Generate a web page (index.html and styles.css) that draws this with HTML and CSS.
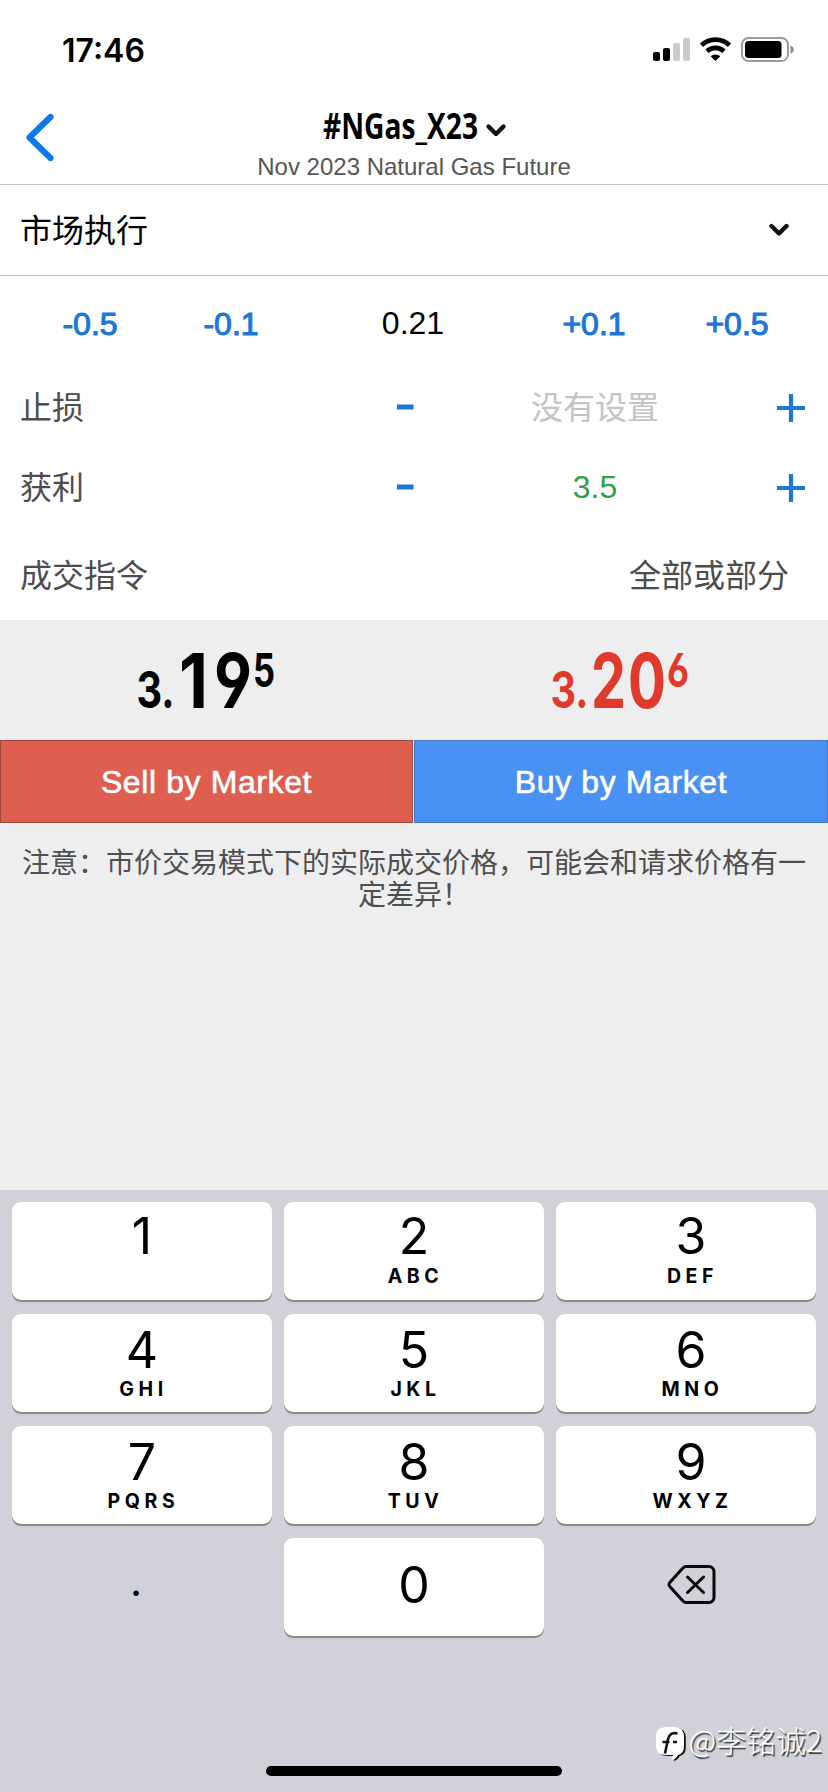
FILE: index.html
```html
<!DOCTYPE html>
<html lang="zh-CN">
<head>
<meta charset="utf-8">
<title>#NGas_X23</title>
<link rel="stylesheet" href="styles.css">
</head>
<body>
<div class="screen">
  <header class="status">
    <span class="clock">17:46</span>
    <svg class="indicators" width="144" height="30" viewBox="0 0 144 30">
      <rect x="2" y="17" width="7" height="9" rx="2"/>
      <rect x="12" y="13" width="7" height="13" rx="2"/>
      <rect x="22" y="8" width="7" height="18" rx="2" fill="#cbcbcb"/>
      <rect x="32" y="3" width="7" height="23" rx="2" fill="#cbcbcb"/>
      <g fill="none" stroke="#000" stroke-width="4.6">
        <path d="M50.5 10.2a20.5 20.5 0 0 1 28 0"/>
        <path d="M56 16.2a12.6 12.6 0 0 1 17 0"/>
      </g>
      <path d="M64.500 26l-4.800-4.700a7 7 0 0 1 9.600 0z"/>
      <rect x="91" y="3" width="46" height="23" rx="6.500" fill="none" stroke="#9c9c9c" stroke-width="2"/>
      <rect x="94" y="6" width="36.500" height="17" rx="3.500"/>
      <path d="M139.500 10.500q3.300 1 3.300 4t-3.300 4z" fill="#8c8c8c"/>
    </svg>
  </header>

  <nav class="navbar">
    <svg class="back" width="30" height="50" viewBox="0 0 30 50"><path d="M24.500 5L3.500 25.500L24.500 46" fill="none" stroke="#0f7ae5" stroke-width="6.200" stroke-linecap="round" stroke-linejoin="round"/></svg>
    <div class="heading">
      <svg class="symbol" width="184" height="52" viewBox="0 -6 184 52">
        <text class="symbol-text" x="1" y="33" textLength="155" lengthAdjust="spacingAndGlyphs">#NGas_X23</text>
        <path class="chevron" d="M166.500 20.500L174 28L181.500 20.500"/>
      </svg>
      <div class="subtitle">Nov 2023 Natural Gas Future</div>
    </div>
  </nav>

  <div class="mode">
    <span>市场执行</span>
    <svg width="22" height="16" viewBox="0 0 22 16"><path class="chevron" d="M3.500 3L11 10.500L18.500 3"/></svg>
  </div>

  <div class="volume">
    <span class="step">-0.5</span>
    <span class="step">-0.1</span>
    <span class="lots">0.21</span>
    <span class="step">+0.1</span>
    <span class="step">+0.5</span>
  </div>

  <div class="level">
    <span class="label">止损</span>
    <svg width="18" height="30" viewBox="0 0 18 30"><path class="sign" d="M1 14H17.500"/></svg>
    <span class="empty">没有设置</span>
    <svg width="30" height="30" viewBox="0 0 30 30"><path class="sign thin" d="M1 15H29M15 1V29"/></svg>
  </div>
  <div class="level">
    <span class="label">获利</span>
    <svg width="18" height="30" viewBox="0 0 18 30"><path class="sign" d="M1 14H17.500"/></svg>
    <span class="profit">3.5</span>
    <svg width="30" height="30" viewBox="0 0 30 30"><path class="sign thin" d="M1 15H29M15 1V29"/></svg>
  </div>
  <div class="fill">
    <span>成交指令</span>
    <span>全部或部分</span>
  </div>

  <main class="trade">
    <div class="pair">
      <svg class="price" width="414" height="120" viewBox="0 0 414 120">
        <text class="p-small" x="136.500" y="88" textLength="38" lengthAdjust="spacingAndGlyphs">3.</text>
        <text class="p-big" x="179" y="88" textLength="29" lengthAdjust="spacingAndGlyphs">1</text>
        <text class="p-big" x="214" y="88" textLength="38" lengthAdjust="spacingAndGlyphs">9</text>
        <text class="p-sup" x="253" y="67" textLength="22" lengthAdjust="spacingAndGlyphs">5</text>
      </svg>
      <svg class="price ask" width="414" height="120" viewBox="0 0 414 120">
        <text class="p-small" x="136.500" y="88" textLength="38" lengthAdjust="spacingAndGlyphs">3.</text>
        <text class="p-big" x="177" y="88" textLength="35" lengthAdjust="spacingAndGlyphs">2</text>
        <text class="p-big" x="214" y="88" textLength="38" lengthAdjust="spacingAndGlyphs">0</text>
        <text class="p-sup" x="253" y="67" textLength="22" lengthAdjust="spacingAndGlyphs">6</text>
      </svg>
      <div class="btn sell">Sell by Market</div>
      <div class="btn buy">Buy by Market</div>
    </div>
    <p class="notice">注意：市价交易模式下的实际成交价格，可能会和请求价格有一<br>定差异！</p>
  </main>

  <section class="keyboard">
    <div class="keys">
      <div class="key"><b>1</b></div>
      <div class="key"><b>2</b><i>ABC</i></div>
      <div class="key right"><b>3</b><i>DEF</i></div>
      <div class="key low"><b>4</b><i>GHI</i></div>
      <div class="key low"><b>5</b><i>JKL</i></div>
      <div class="key low right"><b>6</b><i>MNO</i></div>
      <div class="key low"><b>7</b><i>PQRS</i></div>
      <div class="key low"><b>8</b><i>TUV</i></div>
      <div class="key low right"><b>9</b><i>WXYZ</i></div>
      <div class="plain dot">.</div>
      <div class="key zero"><b>0</b></div>
      <div class="plain">
        <svg class="erase" width="50" height="42" viewBox="0 0 50 42"><path d="M19.500 2.500H42a5 5 0 0 1 5 5v26a5 5 0 0 1-5 5H19.500a5 5 0 0 1-3.800-1.700L3 22.800a3.500 3.500 0 0 1 0-4.600L15.700 4.200a5 5 0 0 1 3.800-1.700zM20.500 13L36.500 28.500M36.500 13L20.500 28.500"/></svg>
      </div>
    </div>
    <div class="home"></div>
  </section>

  <div class="watermark">
    <svg width="34" height="36" viewBox="0 0 34 36">
      <path d="M11 2h8q10 0 10 10v9q0 8-6 9q-2 4-6 5l1-5h-7q-10 0-10-9v-9q0-10 10-10z" transform="translate(1.800 1)" fill="#111"/>
      <path d="M11 2h8q10 0 10 10v9q0 8-6 9q-2 4-6 5l1-5h-7q-10 0-10-9v-9q0-10 10-10z" fill="#fff"/>
      <path d="M22.500 8.500q-7.500-2-9.500 5.500l-3 14.500M7.500 17h7M18 17h4" fill="none" stroke="#15151a" stroke-width="2.600"/>
    </svg>
    <span>@李铭诚2</span>
  </div>
</div>
</body>
</html>
```
FILE: styles.css
```css
* { box-sizing: border-box; }
body { margin: 0; background: #fff; }
.screen {
  position: relative;
  display: flex;
  flex-direction: column;
  width: 828px;
  height: 1792px;
  overflow: hidden;
  color: #000;
  font: 32px/1 "Liberation Sans", "Noto Sans CJK SC", sans-serif;
}
svg { display: block; flex: none; }

.status {
  display: flex;
  justify-content: space-between;
  align-items: center;
  height: 100px;
  padding: 0 33px 0 62px;
}
.clock { padding-top: 1px; font: 600 32px/1 Inter, sans-serif; letter-spacing: 0; }

.navbar {
  display: grid;
  grid-template-columns: 80px 1fr 80px;
  height: 85px;
  border-bottom: 1px solid #c4c4c6;
}
.back { margin: 12px 0 0 26px; }
.heading { display: flex; flex-direction: column; align-items: center; }
.symbol { overflow: visible; }
.symbol-text { font: 700 36px "Open Sans", sans-serif; }
.chevron { fill: none; stroke: #111; stroke-width: 4.4; stroke-linecap: round; stroke-linejoin: round; }
.subtitle { margin-top: 2px; font-size: 24px; line-height: 26px; color: #555; white-space: nowrap; }

.mode {
  display: flex;
  justify-content: space-between;
  align-items: center;
  height: 91px;
  padding: 1px 38px 0 20px;
  border-bottom: 1px solid #c4c4c6;
}

.volume {
  display: grid;
  grid-template-columns: 142px 140px 224px 138px 148px;
  align-items: center;
  height: 92px;
  padding: 4px 0 0 19px;
  text-align: center;
}
.step { color: #1c77d8; -webkit-text-stroke: 1.1px #1c77d8; }
.lots { padding-bottom: 2px; }

.level {
  display: grid;
  grid-template-columns: 375px 60px 320px 72px;
  align-items: center;
  justify-items: center;
  height: 80px;
}
.label { justify-self: start; padding-left: 20px; color: #4d4d4f; }
.empty { color: #c4c4c6; }
.profit { padding-bottom: 2px; color: #2fa043; }
.sign { fill: none; stroke: #1c77d8; stroke-width: 5; }
.sign.thin { stroke-width: 4.2; }

.fill {
  display: flex;
  justify-content: space-between;
  align-items: center;
  height: 92px;
  padding: 3px 39px 0 20px;
  color: #4d4d4f;
}

.trade { flex: 1; background: #eeeeef; }
.pair { display: grid; grid-template-columns: 414px 414px; }
.price { fill: #000; font-family: Inter, sans-serif; font-feature-settings: "cv03", "cv04"; }
.price.ask { fill: #e03a2c; }
.p-small { font-size: 51px; font-weight: 700; }
.p-big { font-size: 75px; font-weight: 700; }
.p-sup { font-size: 47px; font-weight: 700; }
.btn {
  height: 83px;
  line-height: 82px;
  text-align: center;
  color: #fff;
  letter-spacing: 0.6px;
  -webkit-text-stroke: 0.6px #fff;
}
.sell { background: #de5e50; border: 1px solid #a0473f; margin-right: 1px; }
.buy { background: #4a91f4; border: 1px solid #4274b8; }
.notice {
  margin: 22px 0 0;
  color: #4f4f51;
  font: 28px/32px "Noto Sans CJK SC", sans-serif;
  text-align: center;
  white-space: nowrap;
}

.keyboard { height: 602px; padding: 12px 12px 0; background: #d1d2d9; }
.keys { display: grid; grid-template-columns: repeat(3, 260px); grid-auto-rows: 98px; gap: 14px 12px; }
.key {
  display: flex;
  flex-direction: column;
  align-items: center;
  padding-top: 9px;
  border-radius: 9px;
  background: #fff;
  box-shadow: 0 2px 0 #88898d;
  font-family: Inter, sans-serif;
}
.key b { font-size: 50px; font-weight: 400; line-height: 50px; }
.key i { margin-top: 3px; padding-left: 3px; font-size: 19.5px; font-style: normal; font-weight: 700; line-height: 24px; letter-spacing: 4.6px; }
.key.low { padding-top: 11px; }
.key.low i { margin-top: 2px; }
.key.right { padding-left: 10px; }
.key.zero { padding-top: 22px; }
.plain { display: flex; justify-content: center; align-items: center; }
.dot { padding: 0 12px 12px 0; font: 42px/50px Inter, sans-serif; }
.erase { margin: -5px 0 0 11px; fill: none; stroke: #08090c; stroke-width: 3; stroke-linecap: round; stroke-linejoin: round; }
.home { width: 296px; height: 10px; margin: 130px auto 0; border-radius: 5px; background: #000; }

.watermark {
  position: absolute;
  right: 6px;
  bottom: 31px;
  display: flex;
  align-items: flex-start;
  color: #fff;
  font: 300 30px/28px "Noto Sans CJK SC", sans-serif;
  text-shadow: 1.5px 1.5px 1px #333;
}
```
